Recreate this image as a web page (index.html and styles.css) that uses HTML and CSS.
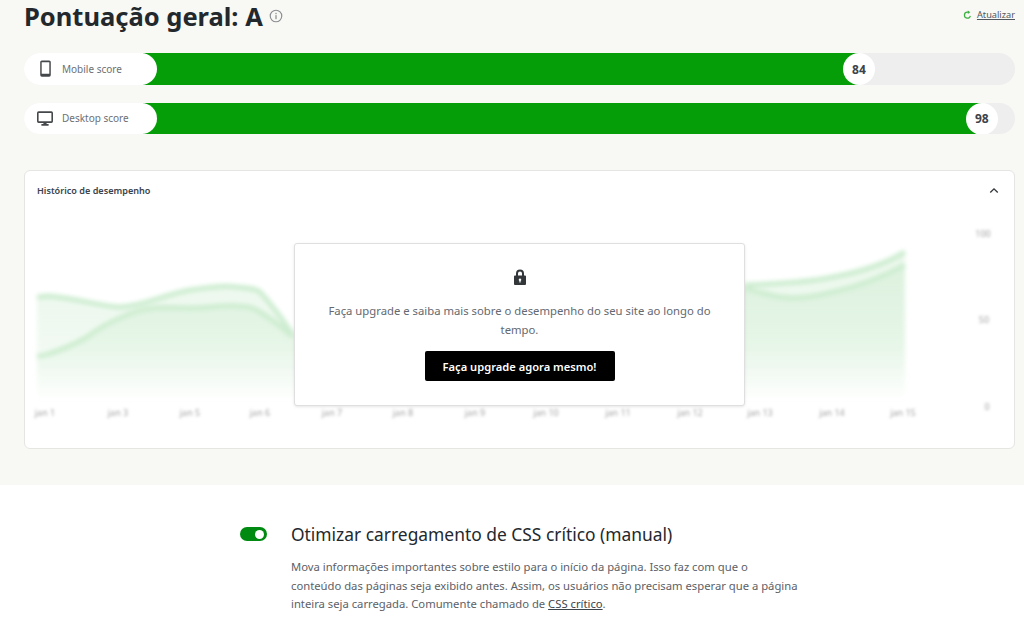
FILE: index.html
```html
<!DOCTYPE html>
<html lang="pt-BR">
<head>
<meta charset="utf-8">
<title>Pontuação geral</title>
<link rel="stylesheet" href="styles.css">
</head>
<body>
<section class="summary">
  <header class="summary-head">
    <h1 class="grade">Pontuação geral: A
      <svg class="info" viewBox="0 0 16 16" width="14" height="14"><circle cx="8" cy="8" r="6.6" fill="none" stroke="#8a8d90" stroke-width="1.3"/><rect x="7.3" y="7" width="1.4" height="4.6" fill="#8a8d90"/><rect x="7.3" y="4.4" width="1.4" height="1.5" fill="#8a8d90"/></svg>
    </h1>
    <a class="refresh" href="#">
      <svg viewBox="0 0 16 16" width="9" height="10"><path d="M13 9.5A5.3 5.3 0 1 1 8 3h2" fill="none" stroke="#3cb043" stroke-width="2.2"/><path d="M8.6 0l4.4 3-4.4 3z" fill="#3cb043"/></svg>
      <span>Atualizar</span>
    </a>
  </header>

  <div class="score">
    <div class="score-label">
      <span class="score-icon"><svg viewBox="0 0 16 20" width="13" height="17"><path fill-rule="evenodd" fill="#45484b" d="M3.500 0h9A2 2 0 0 1 14.500 2v16a2 2 0 0 1-2 2h-9a2 2 0 0 1-2-2V2a2 2 0 0 1 2-2zM3.300 2.200v14.300h9.400V2.200z"/></svg></span>
      <span>Mobile score</span>
    </div>
    <div class="score-track">
      <div class="score-fill" style="width:82.100%"><span class="score-value">84</span></div>
    </div>
  </div>

  <div class="score">
    <div class="score-label">
      <span class="score-icon"><svg viewBox="0 0 20 18" width="16" height="15"><path fill-rule="evenodd" fill="#45484b" d="M2 0h16a2 2 0 0 1 2 2v10.500a2 2 0 0 1-2 2h-6v1.500h2.500v2h-9v-2H8v-1.500H2a2 2 0 0 1-2-2V2a2 2 0 0 1 2-2zM2 2v10.500h16V2z"/></svg></span>
      <span>Desktop score</span>
    </div>
    <div class="score-track">
      <div class="score-fill" style="width:96.200%"><span class="score-value">98</span></div>
    </div>
  </div>

  <article class="history">
    <div class="history-head">
      <h2>Histórico de desempenho</h2>
      <svg viewBox="0 0 12 8" width="10" height="7"><path d="M1.500 6.500L6 2l4.500 4.500" fill="none" stroke="#33373a" stroke-width="1.600"/></svg>
    </div>
    <div class="history-body">
      <svg class="chart" viewBox="0 0 990 240" width="990" height="240">
        <defs>
          <linearGradient id="area" x1="0" y1="0" x2="0" y2="1">
            <stop offset="0" stop-color="#bfe6c2" stop-opacity=".32"/>
            <stop offset=".6" stop-color="#bfe6c2" stop-opacity=".22"/>
            <stop offset="1" stop-color="#bfe6c2" stop-opacity="0"/>
          </linearGradient>
          <filter id="blur" filterUnits="userSpaceOnUse" x="0" y="0" width="990" height="240"><feGaussianBlur stdDeviation="2"/></filter>
          <filter id="blur-text" filterUnits="userSpaceOnUse" x="0" y="0" width="990" height="240"><feGaussianBlur stdDeviation="1.800"/></filter>
        </defs>
        <g filter="url(#blur)">
          <path fill="url(#area)" d="M12 89C16 89 20 88 23 88C50 90 75 98 95 99C120 98 140 86 165 82C185 79 200 77 212 79C222 80 230 80 235 84C248 98 258 112 268 127L720 77C750 76 785 74 808 69C835 64 860 56 880 44V192H12Z"/>
          <path fill="url(#area)" d="M12 148C16 148 20 147 23 146C36 142 50 136 62 129C74 120 85 114 95 110C108 104 118 101 128 100C140 99 152 100 165 100C180 100 198 97 212 98C222 98 230 100 235 104C248 112 258 120 268 129L720 80C726 82 732 84 738 85C748 88 758 90 768 90C782 90 796 87 808 84C835 78 860 68 880 57V192H12Z"/>
          <path fill="none" stroke="#cdedd0" stroke-width="5" d="M12 89C16 89 20 88 23 88C50 90 75 98 95 99C120 98 140 86 165 82C185 79 200 77 212 79C222 80 230 80 235 84C248 98 258 112 268 127"/>
          <path fill="none" stroke="#cdedd0" stroke-width="5" d="M12 148C16 148 20 147 23 146C36 142 50 136 62 129C74 120 85 114 95 110C108 104 118 101 128 100C140 99 152 100 165 100C180 100 198 97 212 98C222 98 230 100 235 104C248 112 258 120 268 129"/>
          <path fill="none" stroke="#cdedd0" stroke-width="5" d="M720 77C750 76 785 74 808 69C835 64 860 56 880 44"/>
          <path fill="none" stroke="#cdedd0" stroke-width="5" d="M720 80C726 82 732 84 738 85C748 88 758 90 768 90C782 90 796 87 808 84C835 78 860 68 880 57"/>
        </g>
        <g class="chart-text" filter="url(#blur-text)">
          <text x="20" y="208">jan 1</text><text x="93" y="208">jan 3</text><text x="165" y="208">jan 5</text><text x="235" y="208">jan 6</text><text x="307" y="208">jan 7</text><text x="378" y="208">jan 8</text><text x="450" y="208">jan 9</text><text x="521" y="208">jan 10</text><text x="593" y="208">jan 11</text><text x="665" y="208">jan 12</text><text x="735" y="208">jan 13</text><text x="807" y="208">jan 14</text><text x="878" y="208">jan 15</text>
          <text x="958" y="29">100</text><text x="959" y="115">50</text><text x="962" y="202">0</text>
        </g>
      </svg>
      <div class="upgrade">
        <svg class="lock" viewBox="0 0 14 16" width="14" height="16"><path fill-rule="evenodd" fill="#33373a" d="M3 6.500V4.500a4 4 0 0 1 8 0v2h1a1 1 0 0 1 1 1V15a1 1 0 0 1-1 1H2a1 1 0 0 1-1-1V7.500a1 1 0 0 1 1-1zM5 6.500h4V4.500a2 2 0 0 0-4 0zM7 9.500a1.300 1.300 0 0 0-.6 2.450V13.500h1.200v-1.550A1.300 1.300 0 0 0 7 9.500z"/></svg>
        <p>Faça upgrade e saiba mais sobre o desempenho do seu site ao longo do tempo.</p>
        <a class="upgrade-btn" href="#">Faça upgrade agora mesmo!</a>
      </div>
    </div>
  </article>
</section>

<section class="option">
  <span class="toggle"><span class="toggle-knob"></span></span>
  <div class="option-text">
    <h3>Otimizar carregamento de CSS crítico (manual)</h3>
    <p>Mova informações importantes sobre estilo para o início da página. Isso faz com que o conteúdo das páginas seja exibido antes. Assim, os usuários não precisam esperar que a página inteira seja carregada. Comumente chamado de <a href="#">CSS crítico</a>.</p>
  </div>
</section>
</body>
</html>
```

FILE: styles.css
```css
* { box-sizing: border-box; }
html, body { margin: 0; height: 617px; overflow: hidden; background: #fff; }
body { font-family: "Noto Sans", "Open Sans", sans-serif; color: #23282d; }

.summary { background: #f8f8f4; height: 485px; padding: 0 9px 0 24px; }
.summary-head { display: flex; justify-content: space-between; align-items: flex-start; height: 53px; }
.grade { margin: 0; font-size: 25.500px; line-height: 32px; font-weight: 700; color: #23282d; }
.info { vertical-align: 3px; }
.refresh { display: flex; align-items: center; gap: 5px; margin-top: 8px; font-size: 9.200px; line-height: 14px; color: #50575e; }
.refresh span { text-decoration: underline; }

.score { display: flex; height: 31.500px; margin-bottom: 18px; background: #eeeeee; border-radius: 16px; position: relative; }
.score-label { display: flex; align-items: center; width: 133px; flex: none; background: #fff; border-radius: 16px; font-size: 10px; color: #6c7074; position: relative; z-index: 1; }
.score-icon { width: 38px; display: flex; justify-content: center; padding-left: 4px; }
.score-track { flex: 1; margin-left: -14px; border-radius: 0 16px 16px 0; overflow: hidden; }
.score-fill { height: 100%; background: #069e08; position: relative; }
.score-value { position: absolute; right: -16px; top: 0; width: 32px; height: 32px; border-radius: 50%; background: #fff; display: flex; align-items: center; justify-content: center; font-size: 12px; font-weight: 700; color: #3c434a; }

.history { margin-top: 36px; height: 279px; background: #fff; border: 1px solid #e5e5e3; border-radius: 6px; }
.history-head { display: flex; justify-content: space-between; align-items: center; height: 38px; padding: 0 15px 0 12px; }
.history-head h2 { margin: 0; font-size: 9.100px; font-weight: 600; color: #3c434a; }
.history-body { position: relative; }
.chart { display: block; margin-top: -1px; }
.chart-text { font: 9px "Noto Sans", sans-serif; fill: #a2a2a2; text-anchor: middle; }

.upgrade { position: absolute; left: 269px; top: 35px; width: 451px; height: 163px; padding: 25px 20px 0; background: #fff; border: 1px solid #dfdfdf; border-radius: 3px; box-shadow: 0 1px 3px rgba(0,0,0,.1); display: flex; flex-direction: column; align-items: center; text-align: center; }
.upgrade p { margin: 16px 0 12px; font-size: 11.300px; line-height: 19px; color: #646970; }
.upgrade-btn { display: flex; align-items: center; justify-content: center; width: 190px; height: 30px; background: #000; border-radius: 2px; color: #fff; font-size: 11.150px; font-weight: 600; text-decoration: none; }
.lock { flex: none; }

.option { display: flex; align-items: flex-start; padding: 36px 0 0 240px; }
.toggle { flex: none; width: 27px; height: 14px; margin-top: 6px; margin-right: 24px; border-radius: 7px; background: #008a11; display: flex; align-items: center; justify-content: flex-end; padding-right: 3px; }
.toggle-knob { width: 9px; height: 9px; border-radius: 50%; background: #fff; }
.option-text { width: 508px; }
.option-text h3 { margin: 0; font-size: 17.400px; line-height: 26px; font-weight: 400; color: #23282d; }
.option-text p { margin: 11px 0 0; font-size: 11.250px; line-height: 18.500px; color: #5c6167; }
.option-text a { color: #3c434a; }
```
